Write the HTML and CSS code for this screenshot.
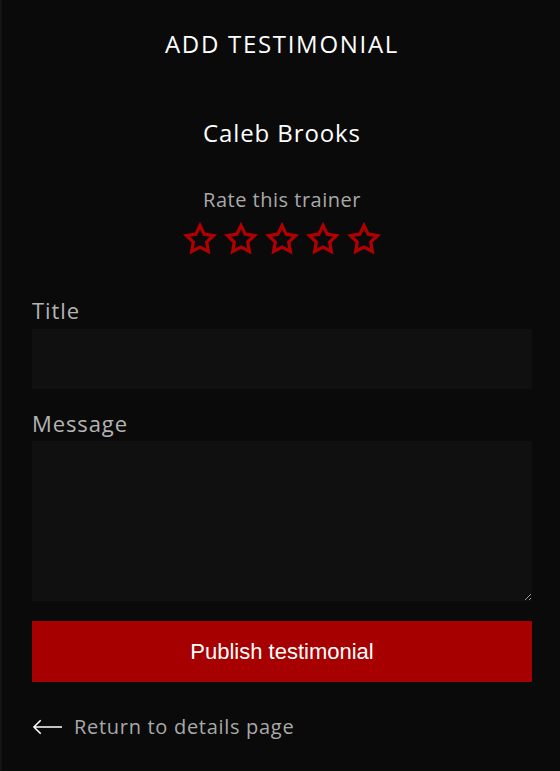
FILE: index.html
```html
<!DOCTYPE html>
<html lang="en">
<head>
<meta charset="utf-8">
<title>Add testimonial</title>
<link rel="stylesheet" href="styles.css">
</head>
<body>
<main class="page">
  <h1 class="heading">ADD TESTIMONIAL</h1>
  <h2 class="trainer">Caleb Brooks</h2>
  <p class="rate-label">Rate this trainer</p>
  <div class="stars">
    <svg class="star" viewBox="0 0 24 24"><path d="M12 2.5l2.95 6.1 6.6.95-4.8 4.65 1.15 6.6L12 17.7l-5.9 3.1 1.15-6.6-4.8-4.65 6.6-.95z"/></svg>
    <svg class="star" viewBox="0 0 24 24"><path d="M12 2.5l2.95 6.1 6.6.95-4.8 4.65 1.15 6.6L12 17.7l-5.9 3.1 1.15-6.6-4.8-4.65 6.6-.95z"/></svg>
    <svg class="star" viewBox="0 0 24 24"><path d="M12 2.5l2.95 6.1 6.6.95-4.8 4.65 1.15 6.6L12 17.7l-5.9 3.1 1.15-6.6-4.8-4.65 6.6-.95z"/></svg>
    <svg class="star" viewBox="0 0 24 24"><path d="M12 2.5l2.95 6.1 6.6.95-4.8 4.65 1.15 6.6L12 17.7l-5.9 3.1 1.15-6.6-4.8-4.65 6.6-.95z"/></svg>
    <svg class="star" viewBox="0 0 24 24"><path d="M12 2.5l2.95 6.1 6.6.95-4.8 4.65 1.15 6.6L12 17.7l-5.9 3.1 1.15-6.6-4.8-4.65 6.6-.95z"/></svg>
  </div>
  <form class="form">
    <label class="field-label" for="title">Title</label>
    <input class="input" id="title" type="text">
    <label class="field-label field-label--spaced" for="message">Message</label>
    <textarea class="textarea" id="message"></textarea>
    <button class="publish" type="button">Publish testimonial</button>
  </form>
  <a class="back" href="#">
    <svg class="back-arrow" viewBox="0 0 32 16"><path d="M31 8H2M9 1L2 8l7 7"/></svg>
    <span>Return to details page</span>
  </a>
</main>
</body>
</html>
```

FILE: styles.css
```css
* { box-sizing: border-box; }

html, body {
  margin: 0;
  background: #0a0a0a;
  height: 100%;
}

body {
  font-family: "Open Sans", "DejaVu Sans", sans-serif;
  color: #ffffff;
  border-left: 2px solid #141414;
}

.page {
  padding: 30px 28px 0 30px;
  display: flex;
  flex-direction: column;
}

.heading {
  margin: 0;
  font-size: 24px;
  line-height: 28px;
  font-weight: 400;
  letter-spacing: 1.7px;
  text-align: center;
}

.trainer {
  margin: 61px 0 0;
  font-size: 24px;
  line-height: 28px;
  font-weight: 400;
  letter-spacing: 0.9px;
  text-align: center;
}

.rate-label {
  margin: 41px 0 0;
  font-size: 20px;
  line-height: 24px;
  letter-spacing: 0.5px;
  color: #a9a9a9;
  text-align: center;
}

.stars {
  margin-top: 10px;
  display: flex;
  justify-content: center;
  gap: 7px;
}

.star {
  width: 34px;
  height: 34px;
  fill: none;
  stroke: #b00000;
  stroke-width: 2.3;
  stroke-linejoin: miter;
}

.form {
  margin-top: 42px;
  display: flex;
  flex-direction: column;
}

.field-label {
  font-size: 22px;
  line-height: 24px;
  letter-spacing: 0.9px;
  color: #b3b3b3;
  margin-bottom: 7px;
}

.field-label--spaced {
  margin-top: 22px;
  margin-bottom: 6px;
}

.input,
.textarea {
  display: block;
  width: 100%;
  border: none;
  outline: none;
  background: #101010;
  color: #fff;
  font: inherit;
}

.input { height: 60px; }

.textarea {
  height: 160px;
  resize: vertical;
}

.publish {
  margin-top: 20px;
  height: 61px;
  border: none;
  background: #a60000;
  color: #fff;
  font-family: "Liberation Sans", Arial, sans-serif;
  font-size: 22px;
}

.back {
  margin-top: 33px;
  display: flex;
  align-items: center;
  gap: 11px;
  color: #a9a9a9;
  text-decoration: none;
  font-size: 20px;
  line-height: 24px;
  letter-spacing: 0.7px;
}

.back-arrow {
  width: 31px;
  height: 16px;
  fill: none;
  stroke: #ffffff;
  stroke-width: 1.6;
}
```
